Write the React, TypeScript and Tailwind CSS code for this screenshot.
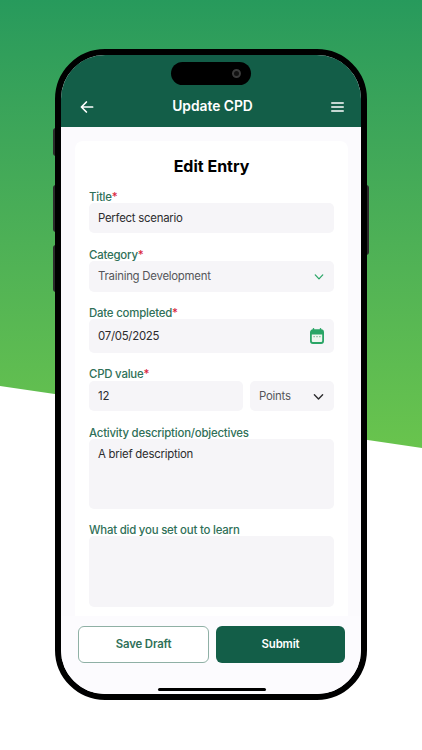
import React from "react";

function Label({ text, required }: { text: string; required?: boolean }) {
  return (
    <div className="h-[14px] pt-[0.5px] text-[11.4px] leading-[14px] font-medium tracking-[-0.2px] text-[#2f7058]">
      {text}
      {required && <span className="text-[#d9233c]">*</span>}
    </div>
  );
}

function Chevron({ color, w }: { color: string; w: number }) {
  return (
    <svg width={w} height="8" viewBox="0 0 12 8" fill="none" stroke={color} strokeWidth="1.5" strokeLinecap="round" strokeLinejoin="round">
      <path d="M1.5 1.5 6 6.2l4.5-4.7" />
    </svg>
  );
}

export default function App() {
  return (
    <div className="relative w-[422px] h-[750px] overflow-hidden bg-white font-['Inter','Liberation_Sans',sans-serif]">
      <div className="absolute inset-0 bg-gradient-to-b from-[#279a5c] to-[#69c44d] h-[450px] [clip-path:polygon(0_0,100%_0,100%_448px,0_386px)]" />
      <div className="relative pt-[49px] pl-[55px]">
        <div className="relative w-[312px] h-[651px]">
          <div className="absolute left-[-2px] top-[79px] w-[3px] h-[28px] bg-[#2a2a2a] rounded-l-sm" />
          <div className="absolute left-[-2px] top-[136px] w-[3px] h-[47px] bg-[#2a2a2a] rounded-l-sm" />
          <div className="absolute left-[-2px] top-[196px] w-[3px] h-[47px] bg-[#2a2a2a] rounded-l-sm" />
          <div className="absolute right-[-2px] top-[136px] w-[3px] h-[70px] bg-[#2a2a2a] rounded-r-sm" />
          <div className="relative w-full h-full rounded-[50px] border-[6px] border-black bg-[#fbfafd] overflow-hidden flex flex-col">
            <div className="absolute left-[110px] top-[7px] w-[80px] h-[23px] rounded-full bg-black flex items-center justify-end pr-[10px]">
              <div className="w-[9px] h-[9px] rounded-full border-[2px] border-[#3a3a3a] bg-[#111]" />
            </div>
            <div className="h-[72px] shrink-0 bg-[#135e48] flex items-end justify-between pl-[19px] pr-[17px] pb-[13px] text-white">
              <svg width="14" height="14" viewBox="0 0 14 14" fill="none" stroke="white" strokeWidth="1.7" strokeLinecap="round" strokeLinejoin="round">
                <path d="M12.6 7H1.6M6.4 2 1.4 7l5 5" />
              </svg>
              <span className="text-[13.8px] leading-[16px] font-semibold">Update CPD</span>
              <svg width="13" height="14" viewBox="0 0 13 14" fill="none" stroke="white" strokeWidth="1.6" strokeLinecap="round">
                <path d="M.8 3h11.4M.8 7h11.4M.8 11h11.4" />
              </svg>
            </div>
            <div className="flex-1 min-h-0 overflow-hidden pt-[14px] px-[14px]">
              <div className="h-[500px] w-[273px] bg-white rounded-t-[8px] px-[14px] pt-[14px]">
                <div className="text-center text-[16px] leading-[22px] font-bold text-black">Edit Entry</div>
                <div className="mt-[12px]"><Label text="Title" required /></div>
                <div className="h-[30px] rounded-[5px] bg-[#f6f5f8] flex items-center px-[9px] pt-[1px] text-[11.4px] tracking-[-0.25px] text-[#2c2c2e]">Perfect scenario</div>
                <div className="mt-[14px]"><Label text="Category" required /></div>
                <div className="h-[31px] rounded-[5px] bg-[#f6f5f8] flex items-center justify-between pl-[9px] pr-[10px] pt-[1px] text-[11.4px] tracking-[-0.25px] text-[#55555a]">
                  <span>Training Development</span>
                  <Chevron color="#2aa566" w={10} />
                </div>
                <div className="mt-[13px]"><Label text="Date completed" required /></div>
                <div className="h-[34px] rounded-[5px] bg-[#f6f5f8] flex items-center justify-between pl-[9px] pr-[10px] text-[11.4px] tracking-[-0.25px] text-[#2c2c2e]">
                  <span className="pt-[1px]">07/05/2025</span>
                  <svg width="14" height="16" viewBox="0 0 14 16" fill="none">
                    <rect x="0.9" y="2.2" width="12.2" height="12.8" rx="2" stroke="#2aa566" strokeWidth="1.8" fill="#eef6ef" />
                    <path d="M1 3.5a1.5 1.5 0 0 1 1.5-1.5h9A1.5 1.5 0 0 1 13 3.5V6.5H1z" fill="#2aa566" />
                    <path d="M3.5.8v2M10.5.8v2" stroke="#2aa566" strokeWidth="1.5" strokeLinecap="round" />
                    <path d="M3.6 8.6h1M6.5 8.6h1M9.4 8.6h1" stroke="#5a9f78" strokeWidth="1.1" />
                  </svg>
                </div>
                <div className="mt-[13px]"><Label text="CPD value" required /></div>
                <div className="mt-[1px] flex gap-[7px]">
                  <div className="h-[30px] w-[154px] rounded-[5px] bg-[#f6f5f8] flex items-center px-[9px] pt-[1px] text-[11.4px] tracking-[-0.25px] text-[#2c2c2e]">12</div>
                  <div className="h-[30px] flex-1 rounded-[5px] bg-[#f6f5f8] flex items-center justify-between pl-[9px] pr-[10px] pt-[1px] text-[11.4px] tracking-[-0.25px] text-[#55555a]">
                    <span>Points</span>
                    <Chevron color="#2c2c2e" w={11} />
                  </div>
                </div>
                <div className="mt-[14px]"><Label text="Activity description/objectives" /></div>
                <div className="h-[70px] rounded-[5px] bg-[#f6f5f8] px-[9px] pt-[8px] text-[11.4px] tracking-[-0.25px] leading-[14px] text-[#2c2c2e]">A brief description</div>
                <div className="mt-[13px]"><Label text="What did you set out to learn" /></div>
                <div className="h-[71px] rounded-[5px] bg-[#f6f5f8]" />
              </div>
            </div>
            <div className="absolute left-0 right-0 bottom-0 h-[78px] bg-[#fcfbfe] flex gap-[7px] pl-[17px] pr-[16px] pt-[10px]">
              <div className="w-[131px] h-[37px] rounded-[6px] border border-[#8fb0a5] bg-white flex items-center justify-center pt-[1px] text-[11.4px] tracking-[-0.15px] font-semibold text-[#2f7058]">Save Draft</div>
              <div className="w-[129px] h-[37px] rounded-[6px] bg-[#135e48] flex items-center justify-center pt-[1px] text-[11.4px] tracking-[-0.15px] font-semibold text-white">Submit</div>
            </div>
            <div className="absolute left-[97px] bottom-[3px] w-[108px] h-[3px] rounded-full bg-black" />
          </div>
        </div>
      </div>
    </div>
  );
}
